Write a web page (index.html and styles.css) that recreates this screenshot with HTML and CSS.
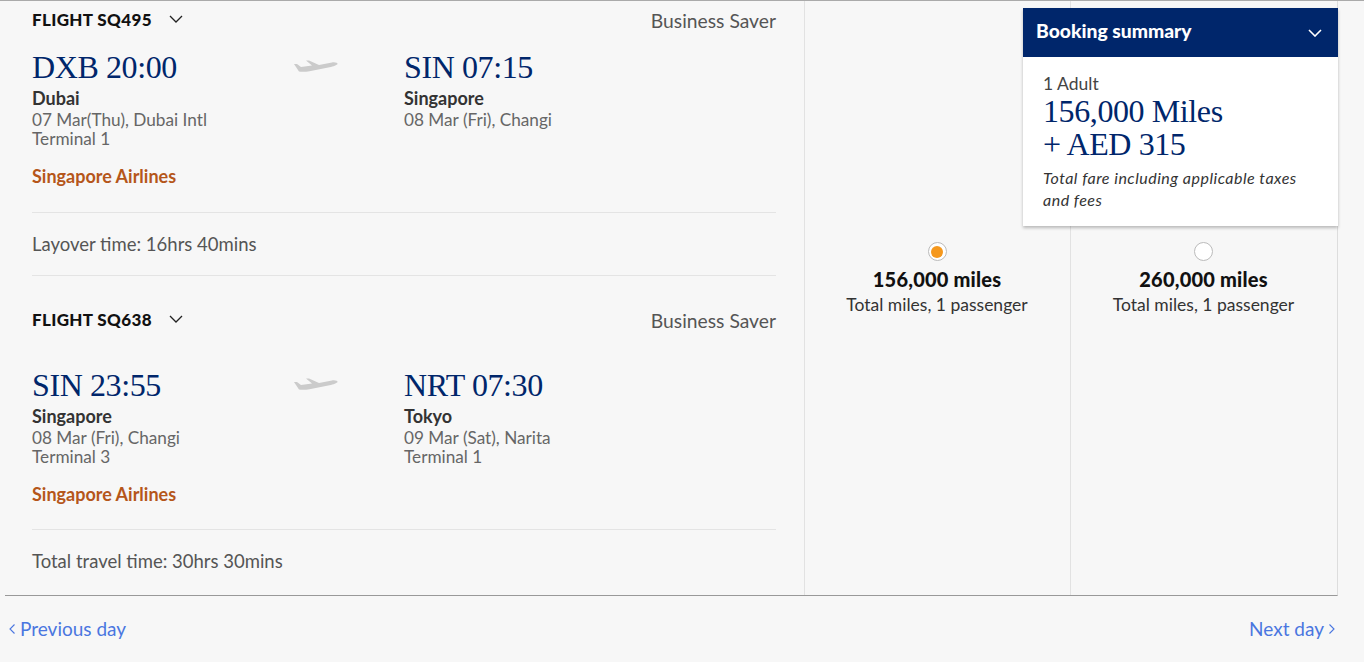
FILE: index.html
```html
<!DOCTYPE html>
<html lang="en">
<head>
<meta charset="utf-8">
<title>Flight selection</title>
<link rel="stylesheet" href="styles.css">
</head>
<body>
<main class="page">
  <section class="results">
    <div class="flights">
      <article class="flight">
        <header class="flight-head">
          <h2 class="flight-no">FLIGHT SQ495</h2>
          <svg class="chev" viewBox="0 0 14 8" width="14" height="8"><path d="M1 1l6 6 6-6" fill="none" stroke="#222" stroke-width="1.3"/></svg>
          <span class="fare">Business Saver</span>
        </header>
        <div class="legs">
          <div class="leg">
            <div class="time">DXB 20:00</div>
            <div class="city">Dubai</div>
            <div class="info">07 Mar(Thu), Dubai Intl</div>
            <div class="info">Terminal 1</div>
          </div>
          <svg class="plane" viewBox="0 0 46 16" width="46" height="16"><path d="M1 6l3 0 4 3 11-1.500-6-5 3 0 10 4.500 13-2.500c3-.5 6 .5 5.500 1.500-.5 1-4 2.500-8 3.300l-20 4c-3 .5-8 .7-10.500.3z" fill="#cbcbcb"/></svg>
          <div class="leg">
            <div class="time">SIN 07:15</div>
            <div class="city">Singapore</div>
            <div class="info">08 Mar (Fri), Changi</div>
          </div>
        </div>
        <div class="airline">Singapore Airlines</div>
      </article>
      <div class="note note-layover">Layover time: 16hrs 40mins</div>
      <article class="flight flight-second">
        <header class="flight-head">
          <h2 class="flight-no">FLIGHT SQ638</h2>
          <svg class="chev" viewBox="0 0 14 8" width="14" height="8"><path d="M1 1l6 6 6-6" fill="none" stroke="#222" stroke-width="1.3"/></svg>
          <span class="fare">Business Saver</span>
        </header>
        <div class="legs legs-second">
          <div class="leg">
            <div class="time">SIN 23:55</div>
            <div class="city">Singapore</div>
            <div class="info">08 Mar (Fri), Changi</div>
            <div class="info">Terminal 3</div>
          </div>
          <svg class="plane" viewBox="0 0 46 16" width="46" height="16"><path d="M1 6l3 0 4 3 11-1.500-6-5 3 0 10 4.500 13-2.500c3-.5 6 .5 5.500 1.500-.5 1-4 2.500-8 3.300l-20 4c-3 .5-8 .7-10.500.3z" fill="#cbcbcb"/></svg>
          <div class="leg">
            <div class="time">NRT 07:30</div>
            <div class="city">Tokyo</div>
            <div class="info">09 Mar (Sat), Narita</div>
            <div class="info">Terminal 1</div>
          </div>
        </div>
        <div class="airline">Singapore Airlines</div>
      </article>
      <div class="note note-total">Total travel time: 30hrs 30mins</div>
    </div>
    <div class="price">
      <span class="radio radio-on"></span>
      <div class="miles">156,000 miles</div>
      <div class="miles-note">Total miles, 1 passenger</div>
    </div>
    <div class="price">
      <span class="radio"></span>
      <div class="miles">260,000 miles</div>
      <div class="miles-note">Total miles, 1 passenger</div>
    </div>
  </section>
  <nav class="day-nav">
    <a class="day-link" href="#"><svg class="arrow" viewBox="0 0 6 10" width="6" height="10"><path d="M5.500 .5L1 5l4.500 4.500" fill="none" stroke="#4a76e0" stroke-width="1.100"/></svg>Previous day</a>
    <a class="day-link" href="#">Next day<svg class="arrow" viewBox="0 0 6 10" width="6" height="10"><path d="M.5 .5L5 5 .5 9.500" fill="none" stroke="#4a76e0" stroke-width="1.100"/></svg></a>
  </nav>
  <aside class="summary">
    <header class="summary-head">
      <span class="summary-title">Booking summary</span>
      <svg viewBox="0 0 14 8" width="14" height="8"><path d="M1 1l6 6 6-6" fill="none" stroke="#fff" stroke-width="1.600"/></svg>
    </header>
    <div class="summary-body">
      <div class="pax">1 Adult</div>
      <div class="total">156,000 Miles<br>+ AED 315</div>
      <p class="total-note">Total fare including applicable taxes and fees</p>
    </div>
  </aside>
</main>
</body>
</html>
```

FILE: styles.css
```css
* { box-sizing: border-box; }
html, body { margin: 0; height: 100%; }
body {
  background: #f7f7f7;
  color: #333;
  font-family: "Lato", "Open Sans", sans-serif;
  overflow: hidden;
}
.page {
  position: relative;
  height: 662px;
  padding-left: 5px;
  border-top: 1px solid #aaa;
}
.results {
  display: flex;
  width: 1333px;
  height: 595px;
  border-bottom: 1px solid #999;
  border-right: 1px solid #ddd;
}
.flights {
  width: 800px;
  padding: 0 28px 0 27px;
  border-right: 1px solid #e2e2e2;
}
.flight-head {
  display: flex;
  align-items: center;
  height: 36px;
}
.flight-no {
  margin: 0;
  font-size: 17px;
  font-weight: 900;
  color: #111;
  line-height: 36px;
  position: relative;
  letter-spacing: .35px;
}
.chev { margin-left: 17px; position: relative; top: -1px; }
.fare {
  margin-left: auto;
  font-size: 19.300px;
  color: #555;
}
.legs {
  display: grid;
  grid-template-columns: 263px 109px 1fr;
  padding-top: 9px;
}
.legs-second { padding-top: 27px; }
.plane { margin: 11px 0 0 -2px; }
.time {
  font-family: "Liberation Serif", serif;
  font-size: 32px;
  line-height: 40px;
  color: #00266b;
  letter-spacing: -.4px;
}
.city {
  font-size: 18px;
  font-weight: 700;
  line-height: 22px;
  color: #333;
}
.info {
  font-size: 17.200px;
  line-height: 18.500px;
  color: #666;
}
.city + .info { margin-top: 2px; }
.airline {
  margin-top: 17px;
  font-size: 18px;
  font-weight: 700;
  line-height: 22px;
  color: #b5561a;
}
.flight { height: 212px; border-bottom: 1px solid #e4e4e4; padding-top: 1px; }
.flight-second { height: 254px; padding-top: 26px; }
.note {
  font-size: 18.500px;
  color: #555;
  display: flex;
  align-items: center;
  padding-bottom: 1px;
}
.note-layover { height: 63px; border-bottom: 1px solid #e4e4e4; }
.note-total { height: 65px; padding-bottom: 3px; }
.price {
  width: 266px;
  padding: 241px 1px 0 0;
  border-right: 1px solid #e2e2e2;
  display: flex;
  flex-direction: column;
  align-items: center;
}
.price:last-child { border-right: 0; }
.radio {
  width: 19px;
  height: 19px;
  border-radius: 50%;
  border: 1px solid #bbb;
  background: #fff;
  display: grid;
  place-items: center;
}
.radio-on::after {
  content: "";
  width: 12px;
  height: 12px;
  border-radius: 50%;
  background: #f5981d;
}
.miles {
  margin-top: 6px;
  font-size: 20px;
  font-weight: 900;
  line-height: 24px;
  color: #111;
  letter-spacing: .2px;
}
.miles-note {
  margin-top: 2px;
  font-size: 17.500px;
  line-height: 24px;
  color: #333;
}
.day-nav {
  display: flex;
  justify-content: space-between;
  width: 1330px;
  padding: 21px 0 0 4px;
}
.day-link {
  display: flex;
  align-items: center;
  gap: 5px;
  font-size: 19px;
  line-height: 24px;
  color: #4a76e0;
  text-decoration: none;
}
.arrow { flex: none; }
.summary {
  position: absolute;
  left: 1023px;
  top: 7px;
  width: 315px;
  background: #fff;
  box-shadow: 0 2px 3px rgba(0,0,0,.25);
}
.summary-head {
  display: flex;
  justify-content: space-between;
  align-items: center;
  height: 49px;
  padding: 0 16px 0 13px;
  background: #00266b;
  color: #fff;
  font-size: 19.300px;
  font-weight: 900;
}
.summary-title { position: relative; top: -2px; }
.summary-body { height: 169px; padding: 16px 20px 0; }
.pax { font-size: 17.500px; line-height: 22px; color: #444; }
.total {
  font-family: "Liberation Serif", serif;
  font-size: 32px;
  line-height: 33px;
  color: #00266b;
  letter-spacing: -.4px;
}
.total-note {
  margin: 6px 0 0;
  font-size: 16px;
  font-style: italic;
  line-height: 22px;
  color: #333;
  letter-spacing: .5px;
}
```
